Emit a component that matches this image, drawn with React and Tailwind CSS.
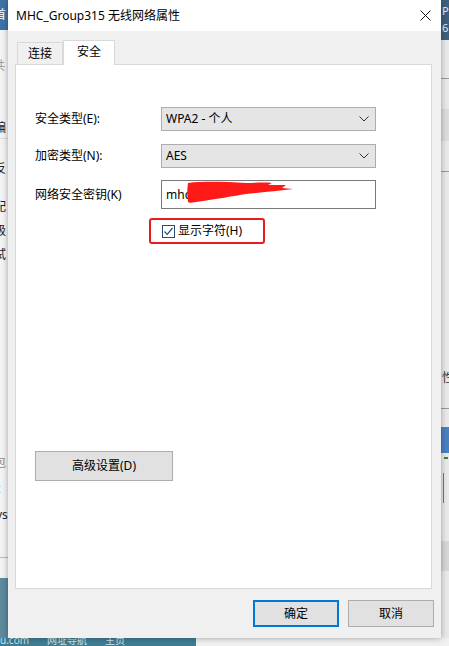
import React from "react";

const FONT = {
  fontFamily: '"Noto Sans", "Noto Sans CJK SC", sans-serif',
};

const Chevron = () => (
  <svg width="10" height="6" viewBox="0 0 10 6" className="shrink-0">
    <path d="M0.5 0.5 L5 5 L9.5 0.5" fill="none" stroke="#333" strokeWidth="1" />
  </svg>
);

const Select = ({ value }) => (
  <div className="h-[24px] w-[215px] flex items-center justify-between pl-[4px] pr-[6px] bg-[#e5e5e5] border border-[#adadad] text-[12px] text-black">
    <span>{value}</span>
    <Chevron />
  </div>
);

const WinButton = ({ children, primary, className = "" }) => (
  <div
    className={
      "flex items-center justify-center bg-[#e1e1e1] text-[12px] text-black " +
      (primary ? "border-2 border-[#0078d7] " : "border border-[#adadad] ") +
      className
    }
  >
    {children}
  </div>
);

const LeftStrip = () => (
  <div className="w-[8px] h-full flex flex-col overflow-hidden bg-[#f3f3f3] text-[12px] text-[#222] leading-none">
    <div className="h-[30px] bg-[#3b74a8] flex items-center">
      <span className="ml-[-6px] text-white">首</span>
    </div>
    <div className="mt-[30px] ml-[-7px] text-[#999]">共</div>
    <div className="mt-[20px] ml-[-7px] text-[#777] text-[10px]">⌄</div>
    <div className="mt-[20px] ml-[-6px]">编</div>
    <div className="mt-[4px] h-px bg-[#ddd]" />
    <div className="mt-[24px] ml-[-6px]">反</div>
    <div className="mt-[26px] ml-[-6px]">配</div>
    <div className="mt-[12px] ml-[-6px]">级</div>
    <div className="mt-[12px] ml-[-6px]">试</div>
    <div className="mt-[196px] ml-[-6px] text-[#888]">包</div>
    <div className="mt-[14px] ml-[-4px] text-[#223]">t</div>
    <div className="mt-[14px] ml-[-4px] text-[#223]">vs</div>
    <div className="mt-[36px] h-px bg-[#bbb]" />
    <div className="mt-[20px] h-[60px] bg-[#5d8a9c]" />
  </div>
);

const RightStrip = () => (
  <div className="w-[8px] h-full flex flex-col overflow-hidden bg-[#e9e9e9] text-[11px] leading-none">
    <div className="h-[40px] bg-[#3e5f7e] text-[#eee] pl-px pt-[5px]">
      <div>P</div>
      <div className="mt-[6px]">6</div>
    </div>
    <div className="mt-[38px] h-px bg-[#999]" />
    <div className="mt-[30px] h-[32px] bg-[#dcdcdc]" />
    <div className="mt-[30px] h-px bg-[#999]" />
    <div className="mt-[200px] pl-px text-[#333] text-[12px]">性</div>
    <div className="mt-[24px] h-px bg-[#999]" />
    <div className="mt-[18px] h-[26px] bg-[#4a7fc0]" />
    <div className="mt-[4px] ml-[3px] h-[2px] w-[4px] bg-[#2a8a3a]" />
    <div className="mt-[14px] ml-[2px] h-[30px] w-px bg-[#777]" />
    <div className="mt-[38px] h-[30px] bg-[#d6d6d6]" />
  </div>
);

// red marker scribble hiding the key
const Scribble = () => (
  <svg width="110" height="24" viewBox="0 0 110 24" className="absolute left-[20px] top-[-6px]">
    <path
      d="M2 3 C20 1 40 2 60 3 C70 3 78 2 86 3 L82 5 L100 5 L96 8 L107 9 L90 11 C80 12 70 13 60 14 C48 16 30 19 10 22 C6 23 3 23 2 22 C1 16 1 9 2 3 Z"
      fill="#ff1a1a"
    />
  </svg>
);

export default function App() {
  return (
    <div className="w-[449px] h-[646px] flex flex-col bg-[#f0f0f0] overflow-hidden" style={FONT}>
      <div className="flex h-[638px]">
        <LeftStrip />

        {/* dialog window */}
        <div className="w-[433px] h-full flex flex-col bg-[#f0f0f0] shadow-[0_0_6px_rgba(0,0,0,0.35)] z-10">
          {/* title bar */}
          <div className="h-[31px] shrink-0 bg-white flex items-center justify-between pl-[8px] pr-[10px]">
            <span className="text-[12px] text-black">MHC_Group315 无线网络属性</span>
            <svg width="11" height="11" viewBox="0 0 11 11">
              <path d="M0.5 0.5 L10.5 10.5 M10.5 0.5 L0.5 10.5" stroke="#111" strokeWidth="1" />
            </svg>
          </div>

          {/* tabs */}
          <div className="mt-[9px] ml-[7px] mr-[9px] flex flex-col">
            <div className="flex items-end h-[24px] pl-[2px]">
              <div className="h-[22px] w-[46px] border border-b-0 border-[#d9d9d9] bg-[#f0f0f0] flex items-center justify-center text-[12px] text-black">
                连接
              </div>
              <div className="h-[25px] w-[52px] mb-[-1px] border border-b-0 border-[#d9d9d9] bg-white flex items-center justify-center text-[12px] text-black relative z-10 pb-[2px]">
                安全
              </div>
            </div>

            {/* panel */}
            <div className="h-[525px] bg-white border border-[#d9d9d9] flex flex-col pl-[19px]">
              <div className="mt-[42px] grid grid-cols-[126px_215px] items-center text-[12px] text-black">
                <span>安全类型(E):</span>
                <Select value="WPA2 - 个人" />
                <span className="mt-[13px]">加密类型(N):</span>
                <div className="mt-[13px]">
                  <Select value="AES" />
                </div>
                <span className="mt-[12px]">网络安全密钥(K)</span>
                <div className="mt-[12px] h-[29px] w-[215px] bg-white border border-[#7a7a7a] flex items-center pl-[4px]">
                  <span className="relative">
                    mhc
                    <Scribble />
                  </span>
                </div>
              </div>

              {/* show characters checkbox */}
              <div className="mt-[9px] ml-[114px] w-[116px] h-[26px] border-2 border-[#e81c1c] rounded-[3px] flex items-center pl-[11px] gap-[3px] text-[12px] text-black">
                <svg width="13" height="13" viewBox="0 0 13 13" className="shrink-0">
                  <rect x="0.5" y="0.5" width="12" height="12" fill="white" stroke="#2c4a72" />
                  <path d="M2.5 6.5 L5.2 9.3 L10.5 3" fill="none" stroke="#2c4a72" strokeWidth="1.2" />
                </svg>
                <span>显示字符(H)</span>
              </div>

              <WinButton className="mt-[207px] w-[138px] h-[30px]">高级设置(D)</WinButton>
            </div>
          </div>

          {/* bottom buttons */}
          <div className="mt-[11px] flex justify-end gap-[9px] pr-[7px]">
            <WinButton primary className="w-[86px] h-[27px]">确定</WinButton>
            <WinButton className="w-[86px] h-[27px]">取消</WinButton>
          </div>
        </div>

        <RightStrip />
      </div>

      {/* desktop below */}
      <div className="h-[8px] flex">
        <div className="w-[196px] bg-[#3f7d92] text-[10px] leading-none text-[#cfe2ea] flex gap-[18px] overflow-hidden">
          <span className="mt-[-3px]">u.com</span>
          <span className="mt-[-3px]">网址导航</span>
          <span className="mt-[-3px]">主页</span>
        </div>
        <div className="flex-1 bg-[#f0f0f0]" />
      </div>
    </div>
  );
}
